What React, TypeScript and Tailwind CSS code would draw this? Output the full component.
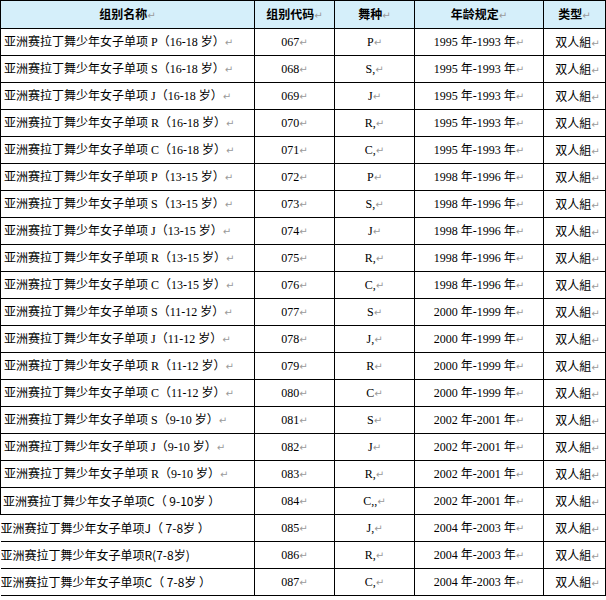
import React from "react";

type Row = [string, string, string, string, boolean];

const ages1 = "1995 年-1993 年";
const ages2 = "1998 年-1996 年";
const ages3 = "2000 年-1999 年";
const ages4 = "2002 年-2001 年";
const ages5 = "2004 年-2003 年";

const rows: Row[] = [
  ["亚洲赛拉丁舞少年女子单项 P（16-18 岁）", "067", "P", ages1, false],
  ["亚洲赛拉丁舞少年女子单项 S（16-18 岁）", "068", "S,", ages1, false],
  ["亚洲赛拉丁舞少年女子单项 J（16-18 岁）", "069", "J", ages1, false],
  ["亚洲赛拉丁舞少年女子单项 R（16-18 岁）", "070", "R,", ages1, false],
  ["亚洲赛拉丁舞少年女子单项 C（16-18 岁）", "071", "C,", ages1, false],
  ["亚洲赛拉丁舞少年女子单项 P（13-15 岁）", "072", "P", ages2, false],
  ["亚洲赛拉丁舞少年女子单项 S（13-15 岁）", "073", "S,", ages2, false],
  ["亚洲赛拉丁舞少年女子单项 J（13-15 岁）", "074", "J", ages2, false],
  ["亚洲赛拉丁舞少年女子单项 R（13-15 岁）", "075", "R,", ages2, false],
  ["亚洲赛拉丁舞少年女子单项 C（13-15 岁）", "076", "C,", ages2, false],
  ["亚洲赛拉丁舞少年女子单项 S（11-12 岁）", "077", "S", ages3, false],
  ["亚洲赛拉丁舞少年女子单项 J（11-12 岁）", "078", "J,", ages3, false],
  ["亚洲赛拉丁舞少年女子单项 R（11-12 岁）", "079", "R", ages3, false],
  ["亚洲赛拉丁舞少年女子单项 C（11-12 岁）", "080", "C", ages3, false],
  ["亚洲赛拉丁舞少年女子单项 S（9-10 岁）", "081", "S", ages4, false],
  ["亚洲赛拉丁舞少年女子单项 J（9-10 岁）", "082", "J", ages4, false],
  ["亚洲赛拉丁舞少年女子单项 R（9-10 岁）", "083", "R,", ages4, false],
  ["亚洲赛拉丁舞少年女子单项C（ 9-10岁 ）", "084", "C,,", ages4, true],
  ["亚洲赛拉丁舞少年女子单项J（ 7-8岁 ）", "085", "J,", ages5, true],
  ["亚洲赛拉丁舞少年女子单项R(7-8岁)", "086", "R,", ages5, true],
  ["亚洲赛拉丁舞少年女子单项C（ 7-8岁 ）", "087", "C,", ages5, true],
];

const Ret = () => (
  <span className="text-[#9a9a9a] text-[10px] font-normal" style={{ fontFamily: '"DejaVu Sans", sans-serif' }}>
    ↵
  </span>
);

export default function App() {
  return (
    <div className="w-[606px] h-[600px] bg-white overflow-hidden" style={{ fontFamily: '"Liberation Serif", "Noto Sans CJK SC", serif' }}>
      <table className="border-collapse table-fixed w-[605px] text-[12px] text-black">
        <colgroup>
          <col className="w-[254px]" />
          <col className="w-[80px]" />
          <col className="w-[80px]" />
          <col className="w-[129px]" />
          <col className="w-[62px]" />
        </colgroup>
        <thead>
          <tr className="bg-[#d5effa] h-[28px]">
            {["组别名称", "组别代码", "舞种", "年龄规定", "类型"].map((h) => (
              <th
                key={h}
                className="border border-black text-center font-bold p-0 leading-none"
                style={{ fontFamily: '"Noto Sans CJK SC", sans-serif' }}
              >
                {h}
                <Ret />
              </th>
            ))}
          </tr>
        </thead>
        <tbody>
          {rows.map(([name, code, dance, age, alt], i) => (
            <tr key={code} className="h-[27px]">
              <td
                className={`border border-black p-0 whitespace-nowrap overflow-hidden leading-none ${
                  alt ? (i === 17 ? "pl-[2px]" : "border-l-0") : "pl-[3px]"
                }`}
                style={alt ? { fontFamily: '"Noto Sans CJK SC", sans-serif' } : undefined}
              >
                {name}
                {!alt && <Ret />}
              </td>
              <td className="border border-black p-0 text-center leading-none">
                {code}
                <Ret />
              </td>
              <td className="border border-black p-0 text-center leading-none">
                {dance}
                <Ret />
              </td>
              <td className="border border-black p-0 text-center leading-none">
                {age}
                <Ret />
              </td>
              <td
                className="border border-black p-0 pl-[6px] text-center leading-none"
                style={{ fontFamily: '"Noto Sans CJK SC", sans-serif' }}
              >
                双人組
                <Ret />
              </td>
            </tr>
          ))}
        </tbody>
      </table>
    </div>
  );
}
